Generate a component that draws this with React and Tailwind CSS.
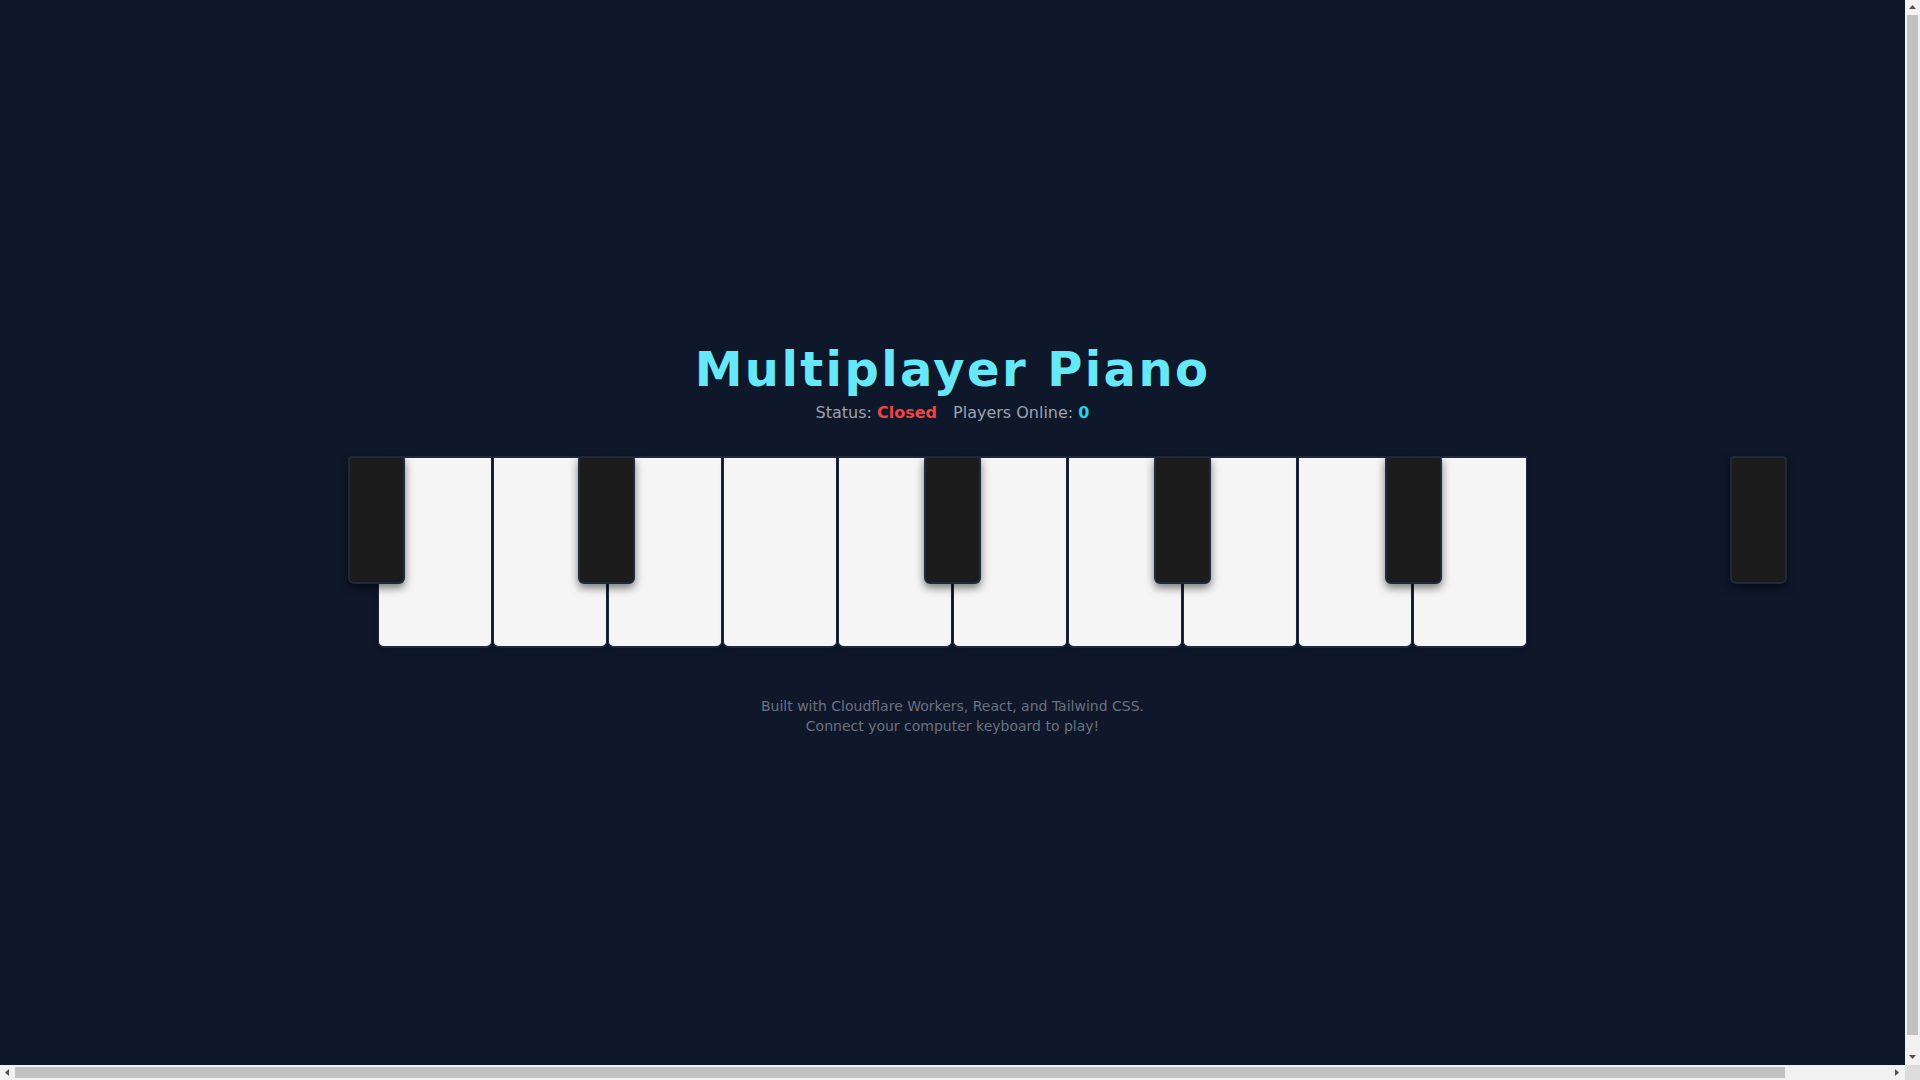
import React from "react";

const WHITE_KEYS = ["C", "D", "E", "F", "G", "A", "B", "C2", "D2", "E2"];
const BLACK_SLOTS = [0, 2, 5, 7, 9, 12];
const BLACK_PITCH = 115.2;

function Arrow({ dir }) {
  const pts = {
    up: "1,6 4.5,2 8,6",
    down: "1,2 4.5,6 8,2",
    left: "6,1 2,4.5 6,8",
    right: "2,1 6,4.5 2,8",
  }[dir];
  return (
    <svg width="9" height="9" viewBox="0 0 9 9">
      <polygon points={pts} fill="#505050" />
    </svg>
  );
}

export default function App() {
  return (
    <div className="h-screen w-screen overflow-hidden grid grid-cols-[1fr_15px] grid-rows-[1fr_15px] bg-[#0f172a] font-['DejaVu_Sans',_'Liberation_Sans',_sans-serif]">
      <div className="overflow-hidden">
        <div className="h-[1080px] flex flex-col items-center justify-center">
          <h1 className="text-5xl leading-[48px] font-bold tracking-wider text-[#67e8f9]">
            Multiplayer Piano
          </h1>
          <div className="mt-2 flex gap-4 text-base leading-6 text-[#9ca3af]">
            <span>
              Status: <span className="font-bold text-[#ef4444]">Closed</span>
            </span>
            <span>
              Players Online: <span className="font-bold text-[#22d3ee]">0</span>
            </span>
          </div>

          <div className="relative mt-[31px] flex gap-px">
            {WHITE_KEYS.map((k) => (
              <div
                key={k}
                className="w-[114px] h-[192px] bg-[#f5f5f5] border-x border-t-2 border-b-2 border-[#1e293b] rounded-b-md shadow-md"
              />
            ))}
            <div className="absolute inset-0">
              {BLACK_SLOTS.map((s) => (
                <div
                  key={s}
                  className="absolute top-0 w-[57px] h-32 bg-[#1c1c1c] border-2 border-[#1e293b] rounded-b-md rounded-t-sm shadow-[0_4px_8px_rgba(0,0,0,0.5)]"
                  style={{ left: Math.round(s * BLACK_PITCH - 30) }}
                />
              ))}
            </div>
          </div>

          <div className="mt-[48px] text-center text-sm leading-5 text-[#6b7280]">
            <p>Built with Cloudflare Workers, React, and Tailwind CSS.</p>
            <p>Connect your computer keyboard to play!</p>
          </div>
        </div>
      </div>

      {/* vertical scrollbar */}
      <div className="bg-[#f1f1f1] flex flex-col">
        <div className="h-[15px] flex items-center justify-center">
          <Arrow dir="up" />
        </div>
        <div className="flex-1 flex flex-col px-[2px]">
          <div className="h-[1020px] bg-[#c1c1c1]" />
        </div>
        <div className="h-[15px] flex items-center justify-center">
          <Arrow dir="down" />
        </div>
      </div>

      {/* horizontal scrollbar */}
      <div className="bg-[#f1f1f1] flex">
        <div className="w-[15px] flex items-center justify-center">
          <Arrow dir="left" />
        </div>
        <div className="flex-1 flex py-[2px]">
          <div className="w-[1770px] bg-[#c1c1c1]" />
        </div>
        <div className="w-[15px] flex items-center justify-center">
          <Arrow dir="right" />
        </div>
      </div>

      <div className="bg-[#dcdcdc]" />
    </div>
  );
}
